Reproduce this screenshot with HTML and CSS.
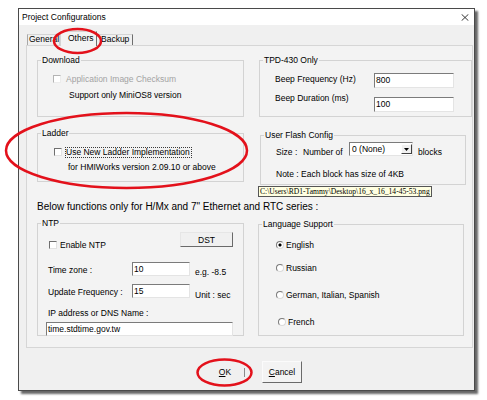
FILE: index.html
```html
<!DOCTYPE html>
<html lang="en">
<head>
<meta charset="utf-8">
<title>Project Configurations</title>
<link rel="stylesheet" href="styles.css">
</head>
<body>
<div class="window">
  <div class="titlebar">
    <span class="title">Project Configurations</span>
    <svg class="close" width="8" height="7" viewBox="0 0 8 7"><path d="M0.6 0.3 L7.4 6.7 M7.4 0.3 L0.6 6.7" stroke="#222" stroke-width="0.9" fill="none"/></svg>
  </div>
  <div class="client">
    <div class="tabs">
      <div class="tab t-general">General</div>
      <div class="tab t-others active">Others</div>
      <div class="tab t-backup">Backup</div>
    </div>
    <div class="page">
      <div class="row row1">
        <fieldset class="group g-download">
          <legend>Download</legend>
          <div class="check dl-check disabled"><span class="cb"></span><span class="cb-text">Application Image Checksum</span></div>
          <div class="line dl-note">Support only MiniOS8 version</div>
        </fieldset>
        <fieldset class="group g-tpd">
          <legend>TPD-430 Only</legend>
          <div class="field tpd-f1"><span class="lbl tpd-lbl">Beep Frequency (Hz)</span><span class="input tpd-in">800</span></div>
          <div class="field tpd-f2"><span class="lbl tpd-lbl">Beep Duration (ms)</span><span class="input tpd-in">100</span></div>
        </fieldset>
      </div>
      <div class="row row2">
        <fieldset class="group g-ladder">
          <legend>Ladder</legend>
          <div class="check ladder-check"><span class="cb"></span><span class="focus">Use New Ladder Implementation</span></div>
          <div class="line ladder-note">for HMIWorks version 2.09.10 or above</div>
        </fieldset>
        <fieldset class="group g-flash">
          <legend>User Flash Config</legend>
          <div class="flash-row">
            <span class="lbl size">Size :</span>
            <span class="lbl num">Number of</span>
            <span class="select"><span class="val">0 (None)</span><span class="drop"><svg width="5" height="3" viewBox="0 0 5 3"><path d="M0 0 H5 L2.5 3 Z" fill="#000"/></svg></span></span>
            <span class="lbl blocks">blocks</span>
          </div>
          <div class="line flash-note">Note : Each block has size of 4KB</div>
        </fieldset>
      </div>
      <div class="section-note">Below functions only for H/Mx and 7" Ethernet and RTC series :</div>
      <div class="row row3">
        <fieldset class="group g-ntp">
          <legend>NTP</legend>
          <div class="ntp-top">
            <div class="check ntp-check"><span class="cb"></span><span class="cb-text">Enable NTP</span></div>
            <div class="button dst">DST</div>
          </div>
          <div class="field ntp-f1"><span class="lbl ntp-lbl">Time zone :</span><span class="input ntp-in">10</span><span class="lbl unit u1">e.g. -8.5</span></div>
          <div class="field ntp-f2"><span class="lbl ntp-lbl">Update Frequency :</span><span class="input ntp-in">15</span><span class="lbl unit u2">Unit : sec</span></div>
          <div class="line ip-lbl">IP address or DNS Name :</div>
          <div class="input ip-in">time.stdtime.gov.tw</div>
        </fieldset>
        <fieldset class="group g-lang">
          <legend>Language Support</legend>
          <div class="radio-row r-en"><span class="radio checked"></span><span>English</span></div>
          <div class="radio-row r-ru"><span class="radio"></span><span>Russian</span></div>
          <div class="radio-row r-de"><span class="radio"></span><span>German, Italian, Spanish</span></div>
          <div class="radio-row r-fr"><span class="radio"></span><span>French</span></div>
        </fieldset>
      </div>
      <div class="tooltip">C:\Users\RD1-Tammy\Desktop\16_x_16_14-45-53.png</div>
    </div>
    <div class="buttons">
      <div class="button ok"><span><u>O</u>K</span></div>
      <div class="button cancel"><span><u>C</u>ancel</span></div>
    </div>
  </div>
</div>
<svg class="marks" width="487" height="400" viewBox="0 0 487 400">
  <ellipse cx="77.5" cy="41" rx="23.5" ry="12"/>
  <ellipse cx="126.5" cy="150.5" rx="120.5" ry="37.5"/>
  <ellipse cx="224.5" cy="372.5" rx="27" ry="13"/>
</svg>
</body>
</html>
```
FILE: styles.css
```css
* { box-sizing: border-box; }
html, body { margin: 0; padding: 0; }
body {
  background: #fff;
  width: 487px;
  height: 400px;
  position: relative;
  overflow: hidden;
  font-family: "Liberation Sans", Arial, sans-serif;
  font-size: 8.5px;
  color: #000;
}

.window {
  margin: 8px 0 0 18px;
  width: 457px;
  height: 383px;
  border: 1px solid #4a4a4a;
  background: #f0f0f0;
  box-shadow: 3px 3px 2px rgba(0, 0, 0, 0.6);
  display: flex;
  flex-direction: column;
}

.titlebar {
  flex: none;
  height: 16px;
  background: #fff;
  display: flex;
  align-items: center;
  justify-content: space-between;
  padding: 0 5px 0 3px;
}
.title { line-height: 12px; }

.client {
  flex: 1;
  display: flex;
  flex-direction: column;
}

.tabs {
  flex: none;
  height: 20px;
  padding-left: 8px;
  display: flex;
  align-items: flex-end;
  position: relative;
  z-index: 2;
}
.tab {
  height: 11px;
  line-height: 9px;
  border-top: 1px solid #d4d4d4;
  border-left: 1px solid #a8a8a8;
  border-right: 1px solid #6e6e6e;
  background: #f0f0f0;
  white-space: nowrap;
}
.t-general { width: 33px; padding-left: 1px; border-right-color: #cfcfcf; }
.t-backup { width: 36px; padding-left: 4px; border-left: none; }
.tab.active {
  width: 37px;
  height: 15px;
  margin-bottom: -1px;
  padding-left: 7px;
  padding-top: 2px;
  background: #f3f3f3;
  border-left-color: #d4d4d4;
}

.page {
  flex: none;
  position: relative;
  margin-left: 7px;
  width: 447px;
  height: 303px;
  border: 1px solid #d6d6d6;
  background: #f3f3f3;
  padding: 9px 0 0 10px;
}

.row { display: flex; align-items: flex-start; }
.row1 { gap: 15px; }
.row2 { gap: 16px; margin-top: 11px; }
.row3 { gap: 14px; margin-top: 5px; }

.group {
  margin: 0;
  padding: 0;
  min-width: 0;
  border: 1px solid #d3d3d3;
}
.group legend {
  margin-left: 3px;
  padding: 0 1px;
  line-height: 10px;
  font-size: 8.5px;
}

.g-download { width: 207px; height: 62px; }
.g-tpd { width: 213px; height: 62px; }
.g-ladder { width: 207px; height: 54px; }
.g-flash { width: 206px; height: 55px; margin-top: 2px; }
.g-ntp { width: 207px; height: 118px; }
.g-lang { width: 206px; height: 117px; margin-top: 1px; }

.line { line-height: 12px; white-space: nowrap; }
.lbl { line-height: 12px; white-space: nowrap; }

.check { display: flex; align-items: center; height: 12px; white-space: nowrap; }
.cb {
  flex: none;
  width: 8px;
  height: 8px;
  background: #fff;
  border: 1px solid;
  border-color: #6f6f6f #e2e2e2 #e2e2e2 #6f6f6f;
}
.disabled { color: #a3a3a3; }
.disabled .cb { border-color: #b4b4b4 #ececec #ececec #b4b4b4; }

.dl-check { margin-top: 8px; padding-left: 15px; gap: 5px; }
.dl-note { margin-top: 4px; padding-left: 31px; }

.field { display: flex; align-items: flex-start; }
.input {
  background: #fff;
  border: 1px solid;
  border-color: #7b7b7b #e4e4e4 #e4e4e4 #7b7b7b;
  padding-left: 1px;
  white-space: nowrap;
}
.tpd-f1 { margin-top: 8px; padding-left: 15px; }
.tpd-f2 { margin-top: 4px; padding-left: 15px; }
.tpd-lbl { width: 99px; }
.tpd-in { width: 80px; height: 15px; line-height: 13px; }
.tpd-f2 .tpd-in { margin-top: 5px; }

.ladder-check { margin-top: 8px; padding-left: 16px; gap: 3px; }
.focus {
  border: 1px dotted #3a3a3a;
  line-height: 9px;
  padding-right: 1px;
}
.ladder-note { margin-top: 3px; padding-left: 30px; }

.flash-row { display: flex; align-items: flex-start; margin-top: 2px; padding-left: 15px; }
.flash-row .lbl { margin-top: 4px; }
.size { width: 27px; }
.num { width: 46px; }
.select {
  width: 64px;
  height: 14px;
  background: #fff;
  border: 1px solid;
  border-color: #7b7b7b #e4e4e4 #e4e4e4 #7b7b7b;
  display: flex;
  justify-content: space-between;
  padding: 1px 0 0 2px;
}
.select .val { line-height: 10px; }
.drop {
  width: 11px;
  height: 10px;
  background: #f0f0f0;
  border: 1px solid;
  border-color: #fdfdfd #404040 #404040 #fdfdfd;
  display: flex;
  align-items: center;
  justify-content: center;
}
.blocks { margin-left: 5px; }
.flash-note { margin-top: 10px; padding-left: 15px; }

.section-note {
  margin-top: 16px;
  font-size: 10px;
  line-height: 12px;
  white-space: nowrap;
}

.ntp-top {
  display: flex;
  justify-content: space-between;
  align-items: flex-start;
  margin-top: 4px;
  padding: 0 10px 0 11px;
}
.ntp-check { margin-top: 7px; gap: 3px; }
.button {
  display: flex;
  align-items: center;
  justify-content: center;
  background: #f0f0f0;
  border: 1px solid;
  border-color: #e6e6e6 #6a6a6a #6a6a6a #e6e6e6;
  white-space: nowrap;
}
.dst { width: 53px; height: 15px; line-height: 10px; }
.ntp-f1 { margin-top: 11px; padding-left: 10px; }
.ntp-f2 { margin-top: 6px; padding-left: 10px; }
.ntp-lbl { width: 84px; margin-top: 2px; }
.ntp-in { width: 58px; height: 14px; line-height: 12px; }
.unit { margin-left: 5px; }
.u1 { margin-top: 4px; }
.u2 { margin-top: 5px; }
.ip-lbl { margin-top: 6px; padding-left: 10px; }
.ip-in { margin: 3px 0 0 8px; width: 187px; height: 14px; line-height: 12px; }

.radio-row { display: flex; align-items: center; gap: 2px; height: 12px; padding-left: 17px; white-space: nowrap; }
.radio {
  width: 8px;
  height: 8px;
  border-radius: 50%;
  border: 1px solid;
  border-color: #7a7a7a #dadada #dadada #7a7a7a;
  background: #fff;
}
.radio.checked { background: radial-gradient(circle, #000 0 1.3px, #fff 1.8px); }
.r-en { margin-top: 10px; }
.r-ru { margin-top: 11px; }
.r-de { margin-top: 15px; }
.r-fr { margin-top: 15px; padding-left: 19px; }

.tooltip {
  position: absolute;
  left: 231px;
  top: 140px;
  width: 174px;
  height: 11px;
  background: #ffffe1;
  border: 1px solid #555;
  font-family: "Liberation Serif", "Times New Roman", serif;
  font-size: 7.6px;
  line-height: 9px;
  padding-left: 1px;
  white-space: nowrap;
  z-index: 3;
}

.buttons {
  display: flex;
  gap: 17px;
  margin-top: 13px;
  padding-left: 186px;
}
.buttons .button { width: 40px; height: 22px; font-size: 8.5px; }
.ok { border-color: #f0f0f0; position: relative; }
.ok::after {
  content: "";
  position: absolute;
  right: -1px;
  top: 6px;
  width: 1px;
  height: 9px;
  background: #8a8a8a;
}
.cancel { border-color: #fbfbfb #6a6a6a #6a6a6a #fbfbfb; background: #f3f3f3; }

.marks {
  position: absolute;
  left: 0;
  top: 0;
  pointer-events: none;
  z-index: 10;
}
.marks ellipse { fill: none; stroke: #e3111b; stroke-width: 2.5; }
```
